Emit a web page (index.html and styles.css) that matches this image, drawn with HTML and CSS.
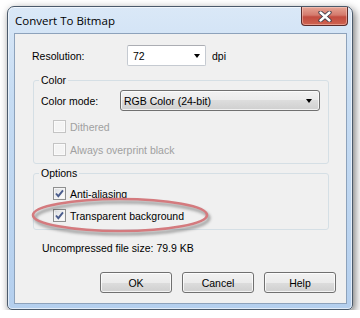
FILE: index.html
```html
<!doctype html>
<html>

<head>
  <title>Convert To Bitmap</title>
  <link rel="stylesheet" href="styles.css">
</head>

<body>
  <div class="window">
    <div class="titlebar">
      <span class="title">Convert To Bitmap</span>
      <div class="close">
        <svg width="14" height="11" viewBox="0 0 14 11">
          <path d="M2.5 1.5 L11.5 9.5 M11.5 1.5 L2.5 9.5" stroke="#3b3b47" stroke-width="4.2" stroke-linecap="round"/>
          <path d="M2.5 1.5 L11.5 9.5 M11.5 1.5 L2.5 9.5" stroke="#ffffff" stroke-width="2.4" stroke-linecap="round"/>
        </svg>
      </div>
    </div>
    <div class="client">
      <div class="res-row">
        <span class="res-label">Resolution:</span>
        <div class="combo"><span>72</span><span class="arrow"></span></div>
        <span class="dpi">dpi</span>
      </div>

      <fieldset class="group color-group">
        <legend>Color</legend>
        <div class="mode-row">
          <span class="mode-label">Color mode:</span>
          <div class="dropdown"><span>RGB Color (24-bit)</span><span class="arrow"></span></div>
        </div>
        <label class="check disabled first"><span class="box"></span>Dithered</label>
        <label class="check disabled second"><span class="box"></span>Always overprint black</label>
      </fieldset>

      <fieldset class="group options-group">
        <legend>Options</legend>
        <label class="check first">
          <span class="box">
            <svg width="11" height="11" viewBox="0 0 11 11"><path d="M2 5.5 L4.3 8.2 L9 2.3" fill="none" stroke="#4a5c8c" stroke-width="1.9"/></svg>
          </span>Anti-aliasing
        </label>
        <label class="check second">
          <span class="box">
            <svg width="11" height="11" viewBox="0 0 11 11"><path d="M2 5.5 L4.3 8.2 L9 2.3" fill="none" stroke="#4a5c8c" stroke-width="1.9"/></svg>
          </span>Transparent background
        </label>
      </fieldset>

      <p class="filesize">Uncompressed file size: 79.9 KB</p>

      <div class="buttons">
        <button type="button">OK</button>
        <button type="button">Cancel</button>
        <button type="button">Help</button>
      </div>

      <svg class="highlight" width="186" height="44" viewBox="0 0 186 44">
        <defs>
          <filter id="soft" x="-10%" y="-30%" width="120%" height="160%">
            <feGaussianBlur stdDeviation="1.6"/>
          </filter>
        </defs>
        <ellipse cx="92" cy="23" rx="87" ry="16" fill="none" stroke="rgba(0,0,0,0.35)" stroke-width="3" filter="url(#soft)"/>
        <ellipse cx="90" cy="20" rx="87" ry="16" fill="none" stroke="#d47a7e" stroke-width="2.6"/>
      </svg>
    </div>
  </div>
</body>

</html>
```

FILE: styles.css
```css
body {
  margin: 0;
  background: #fff;
  font-family: "Liberation Sans", Arial, sans-serif;
  font-size: 10.5px;
  color: #000;
}

.window {
  box-sizing: border-box;
  width: 346px;
  height: 304px;
  margin: 6px 0 0 7px;
  padding: 0 5px 5px 6px;
  border: 1px solid #4b5a6b;
  border-radius: 7px 7px 5px 5px;
  background: linear-gradient(#dae8f7, #c6dcf3 30%, #b4cfee);
  box-shadow: 2px 3px 8px rgba(0, 0, 0, 0.55), inset 0 0 0 1px rgba(255, 255, 255, 0.6);
  display: flex;
  flex-direction: column;
}

.titlebar {
  height: 26px;
  flex: none;
  display: flex;
  align-items: flex-start;
  justify-content: space-between;
}

.title {
  font-family: "Open Sans", sans-serif;
  font-size: 11.5px;
  line-height: 16px;
  margin-top: 6px;
  padding-left: 1px;
}

.close {
  box-sizing: border-box;
  width: 47px;
  height: 19px;
  margin-right: -1px;
  border: 1px solid #5a2b2a;
  border-top: none;
  border-radius: 0 0 4px 4px;
  background: linear-gradient(#e6a595, #d47a6d 45%, #c24c40 55%, #cf6350);
  box-shadow: inset 0 0 0 1px rgba(255, 220, 210, 0.45);
  display: flex;
  align-items: center;
  justify-content: center;
}

.client {
  flex: 1;
  position: relative;
  border: 1px solid #8da2bb;
  background: #f0f0f0;
}

.res-row {
  display: flex;
  align-items: center;
  height: 21px;
  margin: 11px 0 0 17px;
}

.res-label {
  width: 95px;
}

.combo {
  box-sizing: border-box;
  width: 79px;
  height: 21px;
  padding: 0 5px;
  border: 1px solid #c5cad1;
  border-top-color: #abadb3;
  border-radius: 2px;
  background: #fff;
  display: flex;
  align-items: center;
  justify-content: space-between;
}

.arrow {
  width: 0;
  height: 0;
  border-left: 3.5px solid transparent;
  border-right: 3.5px solid transparent;
  border-top: 4px solid #000;
}

.dpi {
  margin-left: 6px;
}

.group {
  box-sizing: border-box;
  width: 296px;
  margin: 0 0 0 18px;
  padding: 0 0 7px 0;
  border: 1px solid #d5dfe5;
  border-radius: 3px;
}

.group legend {
  margin-left: 5px;
  padding: 0 2px;
  line-height: 13px;
}

.color-group {
  margin-top: 8px;
}

.options-group {
  margin-top: 3px;
}

.mode-row {
  display: flex;
  align-items: center;
  height: 21px;
  margin: 3px 0 0 7px;
}

.mode-label {
  width: 79px;
}

.dropdown {
  box-sizing: border-box;
  width: 200px;
  height: 21px;
  padding: 0 7px 0 3px;
  border: 1px solid #707070;
  border-radius: 3px;
  background: linear-gradient(#f2f2f2, #ebebeb 50%, #dddddd 50%, #cfcfcf);
  box-shadow: inset 0 0 0 1px rgba(255, 255, 255, 0.7);
  display: flex;
  align-items: center;
  justify-content: space-between;
}

.check {
  display: flex;
  align-items: center;
  height: 13px;
  margin-left: 19px;
}

.color-group .check.first {
  margin-top: 9px;
}

.color-group .check.second {
  margin-top: 10px;
}

.options-group .check.first {
  margin-top: 7px;
}

.options-group .check.second {
  margin-top: 9px;
}

.box {
  box-sizing: border-box;
  width: 13px;
  height: 13px;
  margin-right: 4px;
  border: 1px solid #8e8f8f;
  background: linear-gradient(135deg, #d8dbe0, #f7f7f7 70%, #fff);
  box-shadow: inset 0 0 0 1px #f4f4f4;
  display: flex;
  align-items: center;
  justify-content: center;
}

.disabled {
  color: #a0a0a0;
}

.disabled .box {
  border-color: #c4c4c4;
  background: #f4f4f4;
  box-shadow: inset 0 0 0 1px #fafafa;
}

.filesize {
  margin: 12px 0 0 27px;
  line-height: 13px;
}

.buttons {
  display: flex;
  justify-content: flex-end;
  gap: 10px;
  margin: 17px 10px 0 0;
}

.buttons button {
  box-sizing: border-box;
  width: 72px;
  height: 21px;
  padding: 0;
  font: inherit;
  color: #000;
  border: 1px solid #707070;
  border-radius: 3px;
  background: linear-gradient(#f2f2f2, #ebebeb 50%, #dddddd 50%, #cfcfcf);
  box-shadow: inset 0 0 0 1px rgba(255, 255, 255, 0.75);
}

.highlight {
  position: absolute;
  left: 15px;
  top: 161px;
}
```
